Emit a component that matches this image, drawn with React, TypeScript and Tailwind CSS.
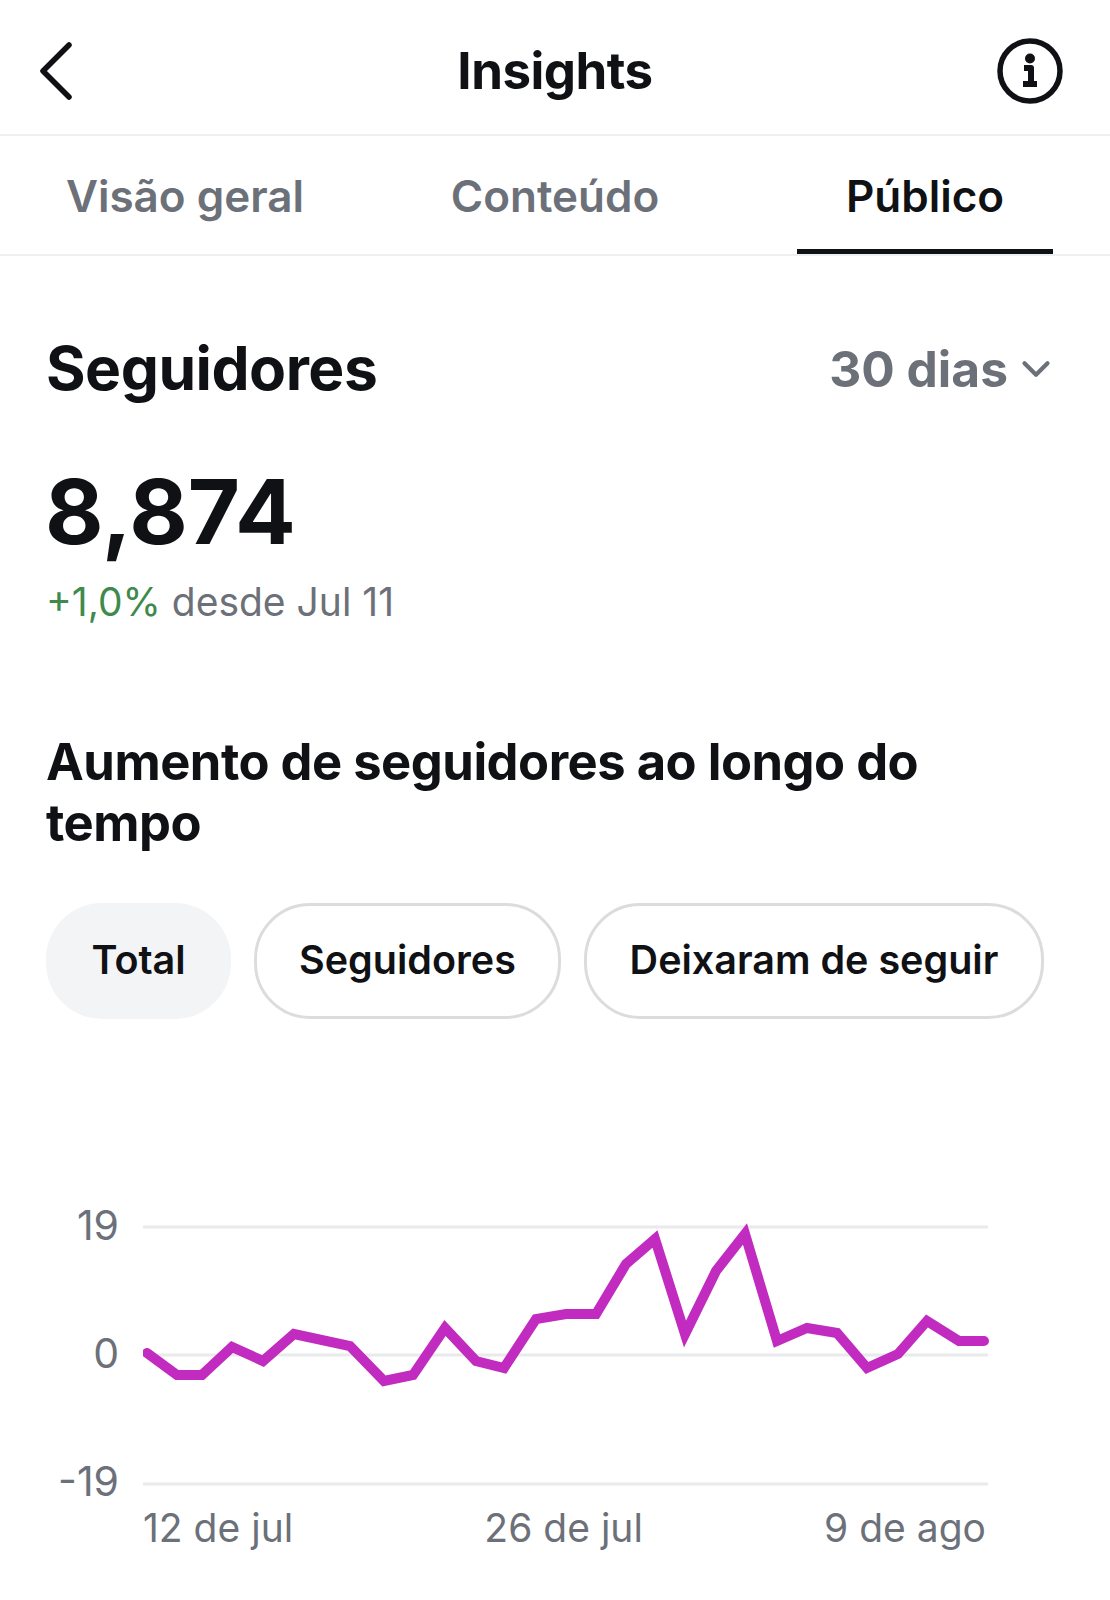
import { ChevronDown } from "lucide-react";

const tabs = ["Visão geral", "Conteúdo", "Público"];
const pills = [
  { label: "Total", active: true, width: "w-[185px]" },
  { label: "Seguidores", active: false, width: "w-[307px]" },
  { label: "Deixaram de seguir", active: false, width: "w-[460px]" },
];

// page coordinates of the line, shifted into the svg below
const points = [
  [147, 1352], [177, 1374], [202, 1374], [232, 1346], [263, 1360], [294, 1333], [350, 1345],
  [384, 1380], [413, 1374], [445, 1327], [476, 1360], [504, 1367], [536, 1318], [566, 1313],
  [596, 1313], [626, 1263], [655, 1238], [685, 1333], [716, 1270], [745, 1233], [777, 1340],
  [807, 1327], [837, 1332], [867, 1367], [898, 1353], [927, 1320], [959, 1340], [984, 1340],
];
const linePoints = points.map(([x, y]) => `${x - 143},${y - 1216}`).join(" ");

export default function App() {
  return (
    <div className="w-[1110px] h-[1600px] bg-white text-[#0f1115] overflow-hidden font-['Inter',sans-serif]">
      {/* Header */}
      <div className="h-[136px] border-b-2 border-[#eeeff1] grid grid-cols-[1fr_auto_1fr] items-center px-[47px] pt-[8px]">
        <svg width="36" height="62" viewBox="0 0 36 62" fill="none" className="-ml-[9px]">
          <path d="M31 5L5 31L31 57" stroke="#0f1115" strokeWidth="5.500" strokeLinecap="round" strokeLinejoin="round" />
        </svg>
        <h1 className="text-[51px] font-bold tracking-[-0.5px]">Insights</h1>
        <svg width="66" height="66" viewBox="0 0 66 66" fill="none" className="justify-self-end">
          <circle cx="33" cy="33" r="30" stroke="#0f1115" strokeWidth="5.500" />
          <circle cx="33" cy="20.500" r="5" fill="#0f1115" />
          <path d="M27 30h7v15M26 46h14" stroke="#0f1115" strokeWidth="6" strokeLinejoin="round" />
        </svg>
      </div>

      {/* Tabs */}
      <div className="h-[120px] border-b-2 border-[#eeeff1] grid grid-cols-3">
        {tabs.map((tab, i) => (
          <div key={tab} className="relative flex items-center justify-center pt-[2px]">
            <span className={`text-[44px] font-semibold ${i === 2 ? "text-[#0f1115]" : "text-[#6c7079]"}`}>{tab}</span>
            {i === 2 && <div className="absolute bottom-0 left-[57px] w-[256px] h-[5px] bg-[#0f1115]" />}
          </div>
        ))}
      </div>

      <div className="pl-[46px] pr-[47px]">
        {/* Seguidores */}
        <div className="mt-[73px] flex items-center justify-between pr-[4px]">
          <h2 className="text-[60.500px] leading-[76px] font-bold tracking-[-0.5px]">Seguidores</h2>
          <div className="flex items-center gap-[5px] pt-[3px] text-[#6c7079]">
            <span className="text-[49.700px] font-bold">30 dias</span>
            <ChevronDown size={46} strokeWidth={2.2} />
          </div>
        </div>
        <p className="mt-[50px] -ml-[1px] text-[90px] leading-[110px] font-bold">8,874</p>
        <p className="mt-[10px] text-[39px] leading-[50px] text-[#6c7079]">
          <span className="text-[#3e8a4d]">+1,0%</span> desde Jul 11
        </p>

        {/* Aumento */}
        <h3 className="mt-[104px] text-[50.700px] leading-[61px] font-bold tracking-[-0.5px] w-[960px]">
          Aumento de seguidores ao longo do tempo
        </h3>
        <div className="mt-[50px] flex gap-[23px]">
          {pills.map((pill) => (
            <div
              key={pill.label}
              className={`h-[116px] ${pill.width} rounded-[56px] flex items-center justify-center text-[39.500px] font-semibold ${
                pill.active ? "bg-[#f3f4f6]" : "border-[3px] border-[#dcdcdc]"
              }`}
            >
              {pill.label}
            </div>
          ))}
        </div>
      </div>

      {/* Chart */}
      <div className="mt-[198px] flex">
        <div className="-mt-[15px] w-[119px] h-[302px] flex flex-col justify-between items-end text-[41px] leading-[46px] text-[#6c7079]">
          <span>19</span>
          <span>0</span>
          <span>-19</span>
        </div>
        <svg width="850" height="286" viewBox="0 0 850 286" fill="none" className="ml-[24px]">
          <path d="M0 10H845M0 138H845M0 267H845" stroke="#e9eaec" strokeWidth="3" />
          <polyline points={linePoints} stroke="#c22bbf" strokeWidth="10" strokeLinejoin="miter" strokeLinecap="round" />
        </svg>
      </div>
      <div className="mt-[-1px] ml-[143px] w-[843px] flex justify-between text-[39px] leading-[50px] text-[#6c7079]">
        <span>12 de jul</span>
        <span className="ml-[10px]">26 de jul</span>
        <span>9 de ago</span>
      </div>
    </div>
  );
}
